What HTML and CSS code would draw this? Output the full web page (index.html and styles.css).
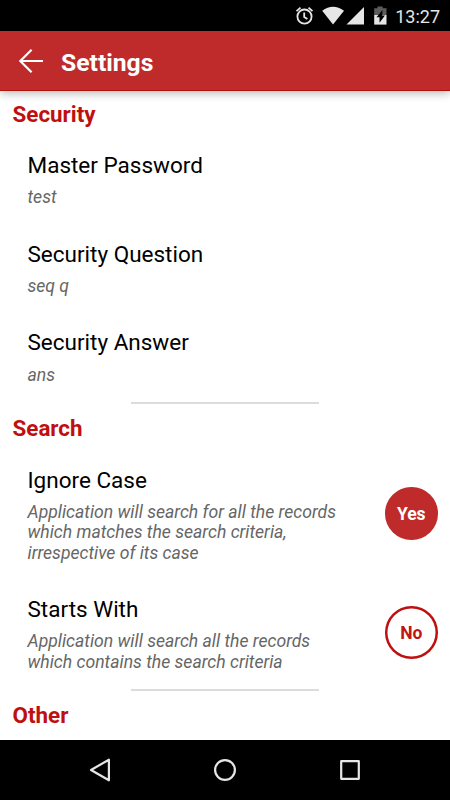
FILE: index.html
```html
<!DOCTYPE html>
<html lang="en">
<head>
  <meta charset="UTF-8">
  <meta name="viewport" content="width=device-width, initial-scale=1.0">
  <title>Settings</title>
  <link rel="stylesheet" href="styles.css">
</head>
<body>
  <div class="status-bar">
    <svg class="status-icons" width="112" height="31" viewBox="0 0 112 31">
      <!-- alarm -->
      <g fill="none" stroke="#e6e6e6" stroke-width="1.8">
        <circle cx="8.5" cy="16.6" r="7.1"/>
        <path d="M8.2 12.5v4.6l3.2 2"/>
        <path d="M.5 11.2l4-3.6M16.5 11.2l-4-3.6"/>
      </g>
      <!-- wifi -->
      <path fill="#e6e6e6" d="M26.2 10.8Q37 2.8 48 10.8L37 24.6z"/>
      <!-- signal -->
      <path fill="#e6e6e6" d="M68 7v17.6H50.5z"/>
      <!-- battery -->
      <path fill="#5c5c5c" d="M78.2 8.2h3.3V6.5h5.2v1.7H90.500V15H78.2z"/>
      <path fill="#e6e6e6" d="M78.2 15h12.300v9.6H78.2z"/>
      <path fill="#000" d="M86.500 10l-6 7.200h3v5.600l5.500-7.300h-2.800z"/>
    </svg>
    <span class="clock">13:27</span>
  </div>

  <header class="app-bar">
    <svg class="back" width="26" height="26" viewBox="0 0 26 26">
      <path fill="none" stroke="#fff" stroke-width="2.2" d="M25 13H2.5M13.600 1.7L2.3 13l11.3 11.3"/>
    </svg>
    <h1>Settings</h1>
  </header>

  <main>
    <section>
      <h2>Security</h2>
      <div class="item">
        <div class="text">
          <h3>Master Password</h3>
          <p>test</p>
        </div>
      </div>
      <div class="item">
        <div class="text">
          <h3>Security Question</h3>
          <p>seq q</p>
        </div>
      </div>
      <div class="item">
        <div class="text">
          <h3>Security Answer</h3>
          <p>ans</p>
        </div>
      </div>
    </section>

    <section>
      <h2>Search</h2>
      <div class="item">
        <div class="text">
          <h3>Ignore Case</h3>
          <p>Application will search for all the records<br>which matches the search criteria,<br>irrespective of its case</p>
        </div>
        <button class="toggle on">Yes</button>
      </div>
      <div class="item">
        <div class="text">
          <h3>Starts With</h3>
          <p>Application will search all the records<br>which contains the search criteria</p>
        </div>
        <button class="toggle">No</button>
      </div>
    </section>

    <section>
      <h2>Other</h2>
    </section>
  </main>

  <nav class="nav-bar">
    <svg width="24" height="24" viewBox="0 0 24 24">
      <path d="M20.9 1.7v20.6L3 12z"/>
    </svg>
    <svg width="24" height="24" viewBox="0 0 24 24">
      <circle cx="12" cy="12" r="9.9"/>
    </svg>
    <svg width="24" height="24" viewBox="0 0 24 24">
      <rect x="3.2" y="3.2" width="17.6" height="17.6"/>
    </svg>
  </nav>
</body>
</html>
```

FILE: styles.css
```css
* { box-sizing: border-box; margin: 0; padding: 0; }

body {
  display: flex;
  flex-direction: column;
  height: 100vh;
  overflow: hidden;
  font-family: Roboto, sans-serif;
  background: #fff;
  color: #000;
}

/* Status bar */
.status-bar {
  display: flex;
  flex: none;
  justify-content: flex-end;
  height: 31px;
  padding-right: 10px;
  background: #000;
}
.status-icons {
  margin-right: -13px;
}
.clock {
  color: #e6e6e6;
  font-size: 18px;
  line-height: 33px;
}

/* Title bar */
.app-bar {
  display: flex;
  flex: none;
  align-items: center;
  height: 60px;
  padding-left: 18px;
  background: #bf2b2b;
  border-bottom: 1px solid #b51010;
  box-shadow: 0 2px 9px rgba(0, 0, 0, 0.3);
  z-index: 1;
}
.app-bar h1 {
  margin: 4px 0 0 17px;
  color: #fff;
  font-size: 24.7px;
  font-weight: 700;
  line-height: 30px;
}

/* Settings list */
main {
  flex: 1;
  min-height: 0;
  overflow: hidden;
}
section {
  padding-top: 9.7px;
}
section + section::before {
  content: "";
  display: block;
  width: 188px;
  height: 2px;
  margin: -8.6px auto 10.6px;
  background: #dcdcdc;
}
h2 {
  height: 34.8px;
  padding-left: 12.5px;
  color: #bf0f0f;
  font-size: 22.4px;
  font-weight: 700;
  line-height: 26px;
}
.item {
  display: flex;
  align-items: center;
  justify-content: space-between;
  padding: 16.8px 12.5px 16.2px 27.5px;
}
h3 {
  font-size: 22.5px;
  font-weight: 400;
  line-height: 26px;
}
.item p {
  margin-top: 9.1px;
  color: #666;
  font-size: 17.6px;
  font-style: italic;
  line-height: 20.5px;
}

/* Yes / No circles */
.toggle {
  flex: none;
  width: 52.5px;
  height: 52.5px;
  margin-bottom: 3px;
  padding-top: 1px;
  color: #bf1515;
  background: #fff;
  border: none;
  border-radius: 50%;
  box-shadow: inset 0 0 0 2.5px #bf0f0f;
  font-family: inherit;
  font-size: 17.5px;
  font-weight: 700;
}
.toggle.on {
  color: #fff;
  background: #bf2b2b;
  box-shadow: none;
}

/* Navigation buttons */
.nav-bar {
  display: flex;
  flex: none;
  align-items: center;
  justify-content: center;
  gap: 101px;
  height: 60px;
  background: #000;
}
.nav-bar svg {
  fill: none;
  stroke: #e6e6e6;
  stroke-width: 2.2;
  stroke-linejoin: round;
}
```
